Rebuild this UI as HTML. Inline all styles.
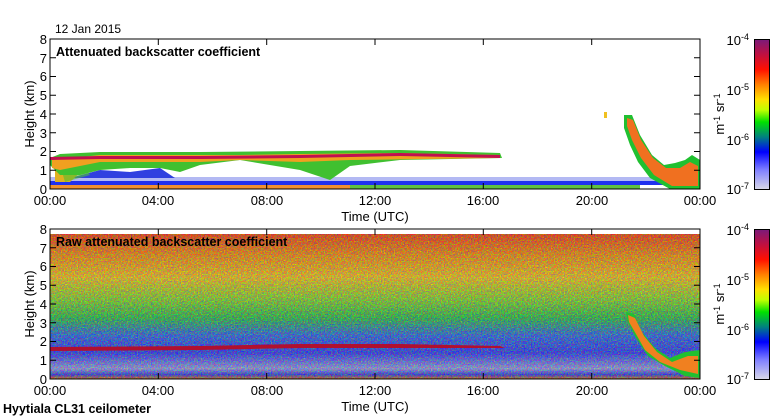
<!DOCTYPE html>
<html><head><meta charset="utf-8"><style>
body{margin:0;background:#fff;width:780px;height:420px;overflow:hidden}
svg{display:block}
text{font-family:"Liberation Sans",sans-serif;font-size:13px;fill:#000}
.b{font-weight:bold;font-size:12.5px}
</style></head><body>
<svg width="780" height="420" viewBox="0 0 780 420">
<defs>
<linearGradient id="cb" x1="0" y1="0" x2="0" y2="1">
<stop offset="0" stop-color="#7a1a7a"/><stop offset="0.1" stop-color="#c01040"/><stop offset="0.2" stop-color="#ff1000"/>
<stop offset="0.3" stop-color="#ff8000"/><stop offset="0.4" stop-color="#ffe000"/><stop offset="0.47" stop-color="#c0ff00"/>
<stop offset="0.55" stop-color="#00e000"/><stop offset="0.65" stop-color="#008080"/><stop offset="0.75" stop-color="#0000ff"/>
<stop offset="0.87" stop-color="#8080ff"/><stop offset="1" stop-color="#d8d8e8"/>
</linearGradient>
<linearGradient id="raw" x1="0" y1="0" x2="0" y2="1">
<stop offset="0" stop-color="#ff4a10"/><stop offset="0.15" stop-color="#ff9a10"/><stop offset="0.3" stop-color="#ffd020"/>
<stop offset="0.45" stop-color="#90e030"/><stop offset="0.58" stop-color="#30c850"/><stop offset="0.7" stop-color="#3070f0"/>
<stop offset="0.82" stop-color="#3040ff"/><stop offset="0.93" stop-color="#a0a8f4"/><stop offset="0.97" stop-color="#3040f0"/><stop offset="1" stop-color="#f08020"/>
</linearGradient>
<filter id="nz" x="0" y="0" width="100%" height="100%">
<feTurbulence type="fractalNoise" baseFrequency="0.7" numOctaves="1" seed="3"/>
<feColorMatrix values="3 -1.5 -1.5 0 0.15  -1.5 3 -1.5 0 0.15  -1.5 -1.5 3 0 0.15  0 0 0 0 1"/>
</filter>
</defs>

<text x="55" y="33" style="font-size:12px">12 Jan 2015</text>
<rect x="50" y="39" width="650" height="150" fill="#fff"/>
<rect x="50" y="177" width="640" height="4" fill="#a0a8f0" opacity="0.8"/>
<rect x="50" y="181" width="640" height="4" fill="#2030f0"/>
<rect x="50" y="185" width="300" height="4" fill="#f09030"/>
<rect x="350" y="185" width="290" height="4" fill="#60c040"/>
<polygon points="70,178 100,170 130,172 160,168 175,178" fill="#3040e0"/>
<polygon points="55,165 80,160 85,168 70,182 55,182" fill="#e0b020"/>
<polygon points="60,165 80,158 90,175 65,182" fill="#50c030" opacity="0.6"/>
<polygon points="50,158 60,154 100,152 200,152 300,151 400,150 500,153 502,158 400,160 350,166 330,180 300,170 240,160 200,165 180,172 160,168 130,168 100,170 80,175 60,175 50,165" fill="#40c030"/>
<polygon points="52,160 100,155 240,155 300,154 400,153 500,155 500,158 350,160 300,162 240,160 200,162 150,162 100,162 60,170 52,168" fill="#f0a020"/>
<polygon points="50,157 100,156 200,156 300,155 400,153 500,155 500,158 400,156 300,158 200,159 100,159 50,160" fill="#c01050"/>
<polygon points="624,115 632,115 640,135 652,155 664,165 675,163 685,160 692,155 700,160 700,189 670,189 650,178 638,162 630,145 624,128" fill="#20c030"/>
<polygon points="627,118 633,120 641,140 653,158 666,168 680,168 690,162 698,166 698,186 672,186 654,175 641,158 632,140 627,126" fill="#f07020"/>
<rect x="604" y="112" width="3" height="6" fill="#f0c020"/>
<rect x="50" y="39" width="650" height="150" fill="none" stroke="#000" stroke-width="1"/>
<text class="b" x="56" y="56">Attenuated backscatter coefficient</text>

<rect x="50" y="234" width="650" height="145" fill="url(#raw)"/>
<rect x="50" y="234" width="650" height="145" filter="url(#nz)" opacity="0.35"/>
<polygon points="50,347 200,346 300,344 400,344 500,346 505,348 400,348 300,348 200,350 50,351" fill="#b01030"/>
<polygon points="626,312 634,314 642,332 655,348 670,358 685,352 700,350 700,378 685,376 665,366 648,356 636,338 628,322" fill="#20c030"/>
<polygon points="628,315 635,318 644,336 657,352 672,362 688,356 698,356 698,374 680,370 660,362 645,350 636,334 629,322" fill="#f08020"/>
<rect x="50" y="229" width="650" height="150" fill="none" stroke="#000" stroke-width="1"/>
<text class="b" x="56" y="246">Raw attenuated backscatter coefficient</text>

<g stroke="#000" stroke-width="1">
<path d="M50,170.25h6M50,151.5h6M50,132.75h6M50,114h6M50,95.25h6M50,76.5h6M50,57.75h6
M700,170.25h-6M700,151.5h-6M700,132.75h-6M700,114h-6M700,95.25h-6M700,76.5h-6M700,57.75h-6
M158.3,189v-6M266.7,189v-6M375,189v-6M483.3,189v-6M591.7,189v-6
M158.3,39v6M266.7,39v6M375,39v6M483.3,39v6M591.7,39v6
M50,360.25h6M50,341.5h6M50,322.75h6M50,304h6M50,285.25h6M50,266.5h6M50,247.75h6
M700,360.25h-6M700,341.5h-6M700,322.75h-6M700,304h-6M700,285.25h-6M700,266.5h-6M700,247.75h-6
M158.3,379v-6M266.7,379v-6M375,379v-6M483.3,379v-6M591.7,379v-6
M158.3,229v6M266.7,229v6M375,229v6M483.3,229v6M591.7,229v6"/>
</g>
<g text-anchor="end">
<text x="47" y="194">0</text><text x="47" y="175">1</text><text x="47" y="156">2</text><text x="47" y="138">3</text>
<text x="47" y="119">4</text><text x="47" y="100">5</text><text x="47" y="81">6</text><text x="47" y="63">7</text><text x="47" y="44">8</text>
<text x="47" y="384">0</text><text x="47" y="365">1</text><text x="47" y="346">2</text><text x="47" y="328">3</text>
<text x="47" y="309">4</text><text x="47" y="290">5</text><text x="47" y="271">6</text><text x="47" y="253">7</text><text x="47" y="234">8</text>
</g>
<g text-anchor="middle">
<text x="50" y="205">00:00</text><text x="158" y="205">04:00</text><text x="267" y="205">08:00</text><text x="375" y="205">12:00</text>
<text x="483" y="205">16:00</text><text x="592" y="205">20:00</text><text x="700" y="205">00:00</text>
<text x="375" y="221">Time (UTC)</text>
<text x="50" y="395">00:00</text><text x="158" y="395">04:00</text><text x="267" y="395">08:00</text><text x="375" y="395">12:00</text>
<text x="483" y="395">16:00</text><text x="592" y="395">20:00</text><text x="700" y="395">00:00</text>
<text x="375" y="411">Time (UTC)</text>
</g>
<text transform="translate(34,114) rotate(-90)" text-anchor="middle">Height (km)</text>
<text transform="translate(34,304) rotate(-90)" text-anchor="middle">Height (km)</text>
<text class="b" x="3" y="413">Hyytiala CL31 ceilometer</text>

<rect x="754.5" y="39.5" width="15" height="150" fill="url(#cb)" stroke="#000"/>
<rect x="754.5" y="229.5" width="15" height="150" fill="url(#cb)" stroke="#000"/>
<g text-anchor="end">
<text x="749" y="45">10<tspan dy="-5" font-size="9">-4</tspan></text>
<text x="749" y="95">10<tspan dy="-5" font-size="9">-5</tspan></text>
<text x="749" y="145">10<tspan dy="-5" font-size="9">-6</tspan></text>
<text x="749" y="194">10<tspan dy="-5" font-size="9">-7</tspan></text>
<text x="749" y="235">10<tspan dy="-5" font-size="9">-4</tspan></text>
<text x="749" y="285">10<tspan dy="-5" font-size="9">-5</tspan></text>
<text x="749" y="335">10<tspan dy="-5" font-size="9">-6</tspan></text>
<text x="749" y="384">10<tspan dy="-5" font-size="9">-7</tspan></text>
</g>
<text transform="translate(724,114) rotate(-90)" text-anchor="middle">m<tspan dy="-4" font-size="9">-1</tspan><tspan dy="4"> sr</tspan><tspan dy="-4" font-size="9">-1</tspan></text>
<text transform="translate(724,304) rotate(-90)" text-anchor="middle">m<tspan dy="-4" font-size="9">-1</tspan><tspan dy="4"> sr</tspan><tspan dy="-4" font-size="9">-1</tspan></text>
</svg>
</body></html>
